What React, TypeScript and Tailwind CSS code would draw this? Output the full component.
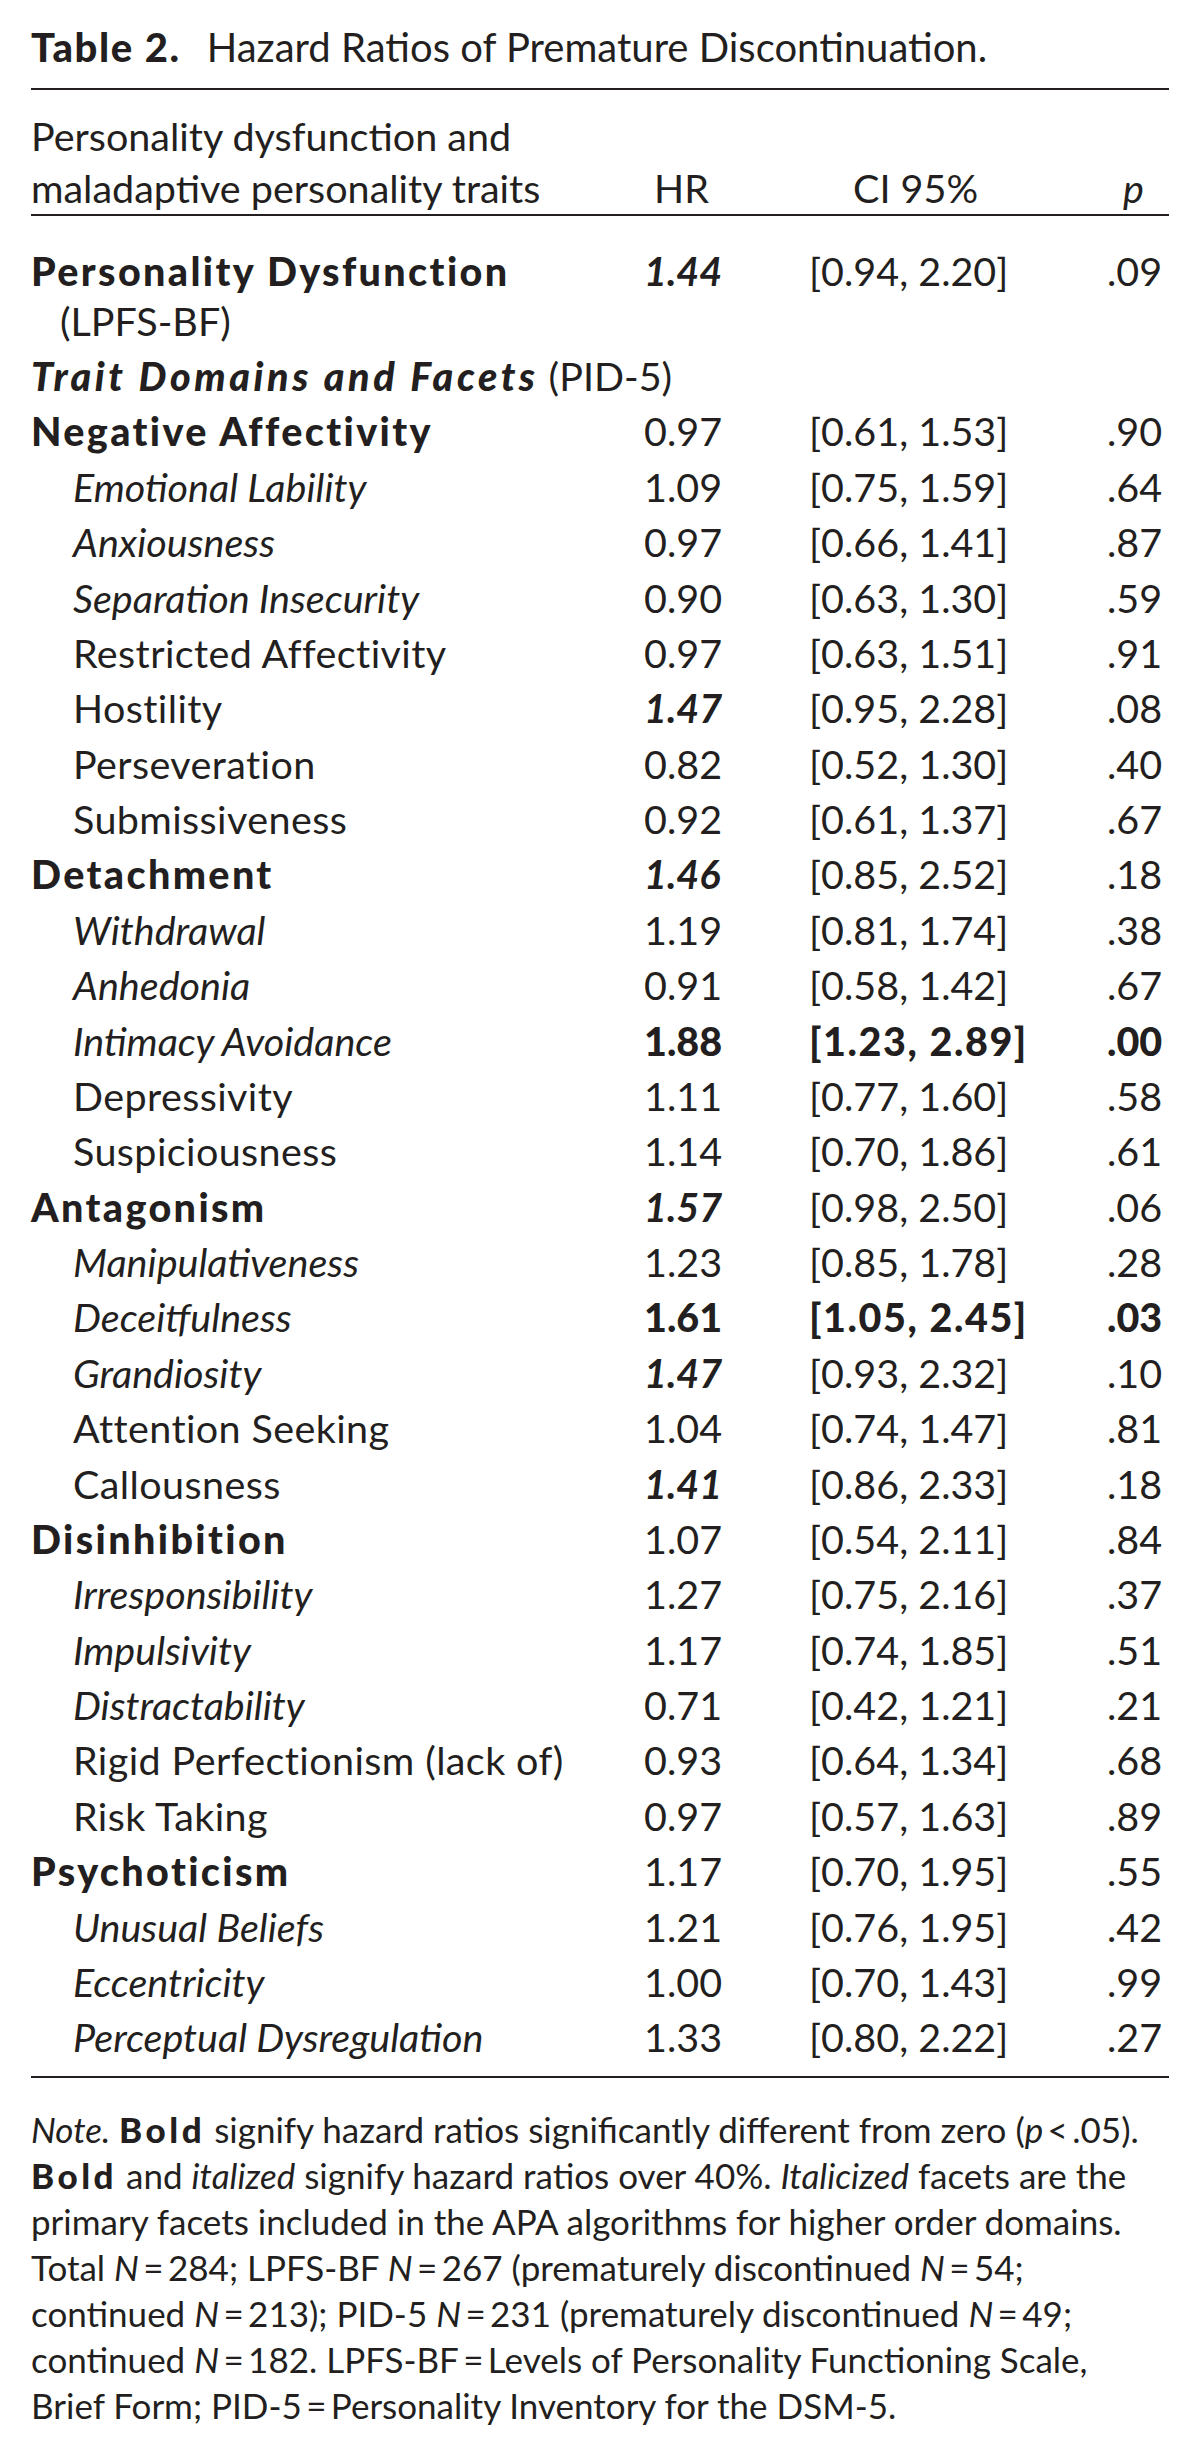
import React from 'react';

type Style = 'b' | 'i' | 'bi' | 'n';

type Row = {
  label: string;
  ls: Style;
  indent?: boolean;
  hr: string;
  hs?: Style;
  ci: string;
  p: string;
  sig?: boolean;
};

const rows: Row[] = [
  { label: 'Negative Affectivity', ls: 'b', hr: '0.97', ci: '[0.61, 1.53]', p: '.90' },
  { label: 'Emotional Lability', ls: 'i', indent: true, hr: '1.09', ci: '[0.75, 1.59]', p: '.64' },
  { label: 'Anxiousness', ls: 'i', indent: true, hr: '0.97', ci: '[0.66, 1.41]', p: '.87' },
  { label: 'Separation Insecurity', ls: 'i', indent: true, hr: '0.90', ci: '[0.63, 1.30]', p: '.59' },
  { label: 'Restricted Affectivity', ls: 'n', indent: true, hr: '0.97', ci: '[0.63, 1.51]', p: '.91' },
  { label: 'Hostility', ls: 'n', indent: true, hr: '1.47', hs: 'bi', ci: '[0.95, 2.28]', p: '.08' },
  { label: 'Perseveration', ls: 'n', indent: true, hr: '0.82', ci: '[0.52, 1.30]', p: '.40' },
  { label: 'Submissiveness', ls: 'n', indent: true, hr: '0.92', ci: '[0.61, 1.37]', p: '.67' },
  { label: 'Detachment', ls: 'b', hr: '1.46', hs: 'bi', ci: '[0.85, 2.52]', p: '.18' },
  { label: 'Withdrawal', ls: 'i', indent: true, hr: '1.19', ci: '[0.81, 1.74]', p: '.38' },
  { label: 'Anhedonia', ls: 'i', indent: true, hr: '0.91', ci: '[0.58, 1.42]', p: '.67' },
  { label: 'Intimacy Avoidance', ls: 'i', indent: true, hr: '1.88', ci: '[1.23, 2.89]', p: '.00', sig: true },
  { label: 'Depressivity', ls: 'n', indent: true, hr: '1.11', ci: '[0.77, 1.60]', p: '.58' },
  { label: 'Suspiciousness', ls: 'n', indent: true, hr: '1.14', ci: '[0.70, 1.86]', p: '.61' },
  { label: 'Antagonism', ls: 'b', hr: '1.57', hs: 'bi', ci: '[0.98, 2.50]', p: '.06' },
  { label: 'Manipulativeness', ls: 'i', indent: true, hr: '1.23', ci: '[0.85, 1.78]', p: '.28' },
  { label: 'Deceitfulness', ls: 'i', indent: true, hr: '1.61', ci: '[1.05, 2.45]', p: '.03', sig: true },
  { label: 'Grandiosity', ls: 'i', indent: true, hr: '1.47', hs: 'bi', ci: '[0.93, 2.32]', p: '.10' },
  { label: 'Attention Seeking', ls: 'n', indent: true, hr: '1.04', ci: '[0.74, 1.47]', p: '.81' },
  { label: 'Callousness', ls: 'n', indent: true, hr: '1.41', hs: 'bi', ci: '[0.86, 2.33]', p: '.18' },
  { label: 'Disinhibition', ls: 'b', hr: '1.07', ci: '[0.54, 2.11]', p: '.84' },
  { label: 'Irresponsibility', ls: 'i', indent: true, hr: '1.27', ci: '[0.75, 2.16]', p: '.37' },
  { label: 'Impulsivity', ls: 'i', indent: true, hr: '1.17', ci: '[0.74, 1.85]', p: '.51' },
  { label: 'Distractability', ls: 'i', indent: true, hr: '0.71', ci: '[0.42, 1.21]', p: '.21' },
  { label: 'Rigid Perfectionism (lack of)', ls: 'n', indent: true, hr: '0.93', ci: '[0.64, 1.34]', p: '.68' },
  { label: 'Risk Taking', ls: 'n', indent: true, hr: '0.97', ci: '[0.57, 1.63]', p: '.89' },
  { label: 'Psychoticism', ls: 'b', hr: '1.17', ci: '[0.70, 1.95]', p: '.55' },
  { label: 'Unusual Beliefs', ls: 'i', indent: true, hr: '1.21', ci: '[0.76, 1.95]', p: '.42' },
  { label: 'Eccentricity', ls: 'i', indent: true, hr: '1.00', ci: '[0.70, 1.43]', p: '.99' },
  { label: 'Perceptual Dysregulation', ls: 'i', indent: true, hr: '1.33', ci: '[0.80, 2.22]', p: '.27' },
];

// Gill Sans bold is much wider than Lato bold, so heavy weight plus some tracking
const heavy = 'font-black tracking-[0.04em]';
const heavyLabel = 'font-black tracking-[0.06em]';

const styleClass = (s?: Style) =>
  s === 'b' ? heavyLabel : s === 'i' ? 'italic' : s === 'bi' ? 'font-bold italic' : 'tracking-[0.01em]';

const grid = 'grid grid-cols-[613px_165px_298px_1fr]';

const TableRow = ({ row }: { row: Row }) => (
  <div className={`${grid} py-[2.7px] leading-[50px]`}>
    <div className={`${row.indent ? 'pl-[42px]' : ''} ${styleClass(row.ls)}`}>{row.label}</div>
    <div className={row.sig ? 'font-black' : row.hs ? styleClass(row.hs) : ''}>{row.hr}</div>
    <div className={row.sig ? heavy : ''}>{row.ci}</div>
    <div className={row.sig ? 'font-black' : ''}>{row.p}</div>
  </div>
);

export default function App() {
  const noteBold = 'font-black tracking-[0.1em]';
  return (
    <div
      className="w-[1200px] min-h-[2455px] bg-white px-[31px] pt-[22px] text-[#231f20]"
      style={{ fontFamily: 'Lato, "Noto Sans", sans-serif' }}
    >
      <div className="text-[40px] leading-[50px] whitespace-nowrap">
        <span className={heavy}>Table 2.</span>
        <span className="ml-[26px]">Hazard Ratios of Premature Discontinuation.</span>
      </div>
      <div className="mt-[16px] h-[2px] bg-[#231f20]" />

      <div className="text-[39.5px]">
        <div className={`${grid} pt-[20px] leading-[52px] items-end`}>
          <div>
            Personality dysfunction and
            <br />
            maladaptive personality traits
          </div>
          <div className="pl-[10px]">HR</div>
          <div className="pl-[44px]">CI 95%</div>
          <div className="pl-[16px] italic">p</div>
        </div>
        <div className="h-[2px] bg-[#231f20]" />

        <div className="pt-[27px] pb-[11px]">
          <div className={`${grid} py-[2.7px] leading-[50px]`}>
            <div>
              <div className={heavyLabel}>Personality Dysfunction</div>
              <div className="pl-[29px]">(LPFS-BF)</div>
            </div>
            <div className="font-bold italic">1.44</div>
            <div>[0.94, 2.20]</div>
            <div>.09</div>
          </div>
          <div className="py-[2.7px] leading-[50px] whitespace-nowrap">
            <span className="font-black italic tracking-[0.09em]">Trait Domains and Facets</span> (PID-5)
          </div>
          {rows.map((row) => (
            <TableRow key={row.label} row={row} />
          ))}
        </div>
        <div className="h-[2px] bg-[#231f20]" />
      </div>

      <div className="mt-[28px] text-[35px] leading-[46px] whitespace-nowrap">
        <div>
          <span className="italic">Note.</span> <span className={noteBold}>Bold</span> signify hazard ratios
          significantly different from zero (<span className="italic">p</span>&thinsp;&lt;&thinsp;.05).
        </div>
        <div>
          <span className={noteBold}>Bold</span> and <span className="italic">italized</span> signify hazard
          ratios over 40%. <span className="italic">Italicized</span> facets are the
        </div>
        <div>primary facets included in the APA algorithms for higher order domains.</div>
        <div>
          Total <span className="italic">N</span>&thinsp;=&thinsp;284; LPFS-BF <span className="italic">N</span>
          &thinsp;=&thinsp;267 (prematurely discontinued <span className="italic">N</span>&thinsp;=&thinsp;54;
        </div>
        <div>
          continued <span className="italic">N</span>&thinsp;=&thinsp;213); PID-5{' '}
          <span className="italic">N</span>&thinsp;=&thinsp;231 (prematurely discontinued{' '}
          <span className="italic">N</span>&thinsp;=&thinsp;49;
        </div>
        <div>
          continued <span className="italic">N</span>&thinsp;=&thinsp;182. LPFS-BF&thinsp;=&thinsp;Levels of
          Personality Functioning Scale,
        </div>
        <div>Brief Form; PID-5&thinsp;=&thinsp;Personality Inventory for the DSM-5.</div>
      </div>
    </div>
  );
}
